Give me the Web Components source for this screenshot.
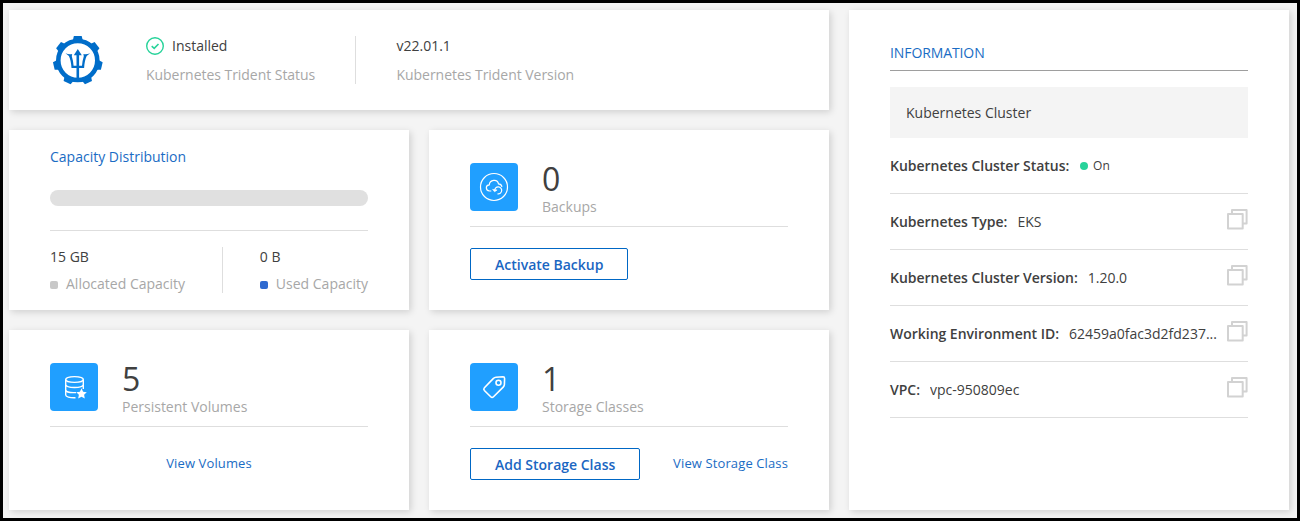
<!DOCTYPE html>
<html lang="en">
<head>
<meta charset="utf-8">
<title>Kubernetes Cluster</title>
<style>
html,body{margin:0;height:100%}
body{font:14px/20px "Open Sans","Noto Sans",sans-serif;color:#404040;overflow:hidden}
</style>
</head>
<body>
<cluster-dashboard></cluster-dashboard>
<script>
const define = (name, html) => customElements.define(name, class extends HTMLElement {
  constructor() {
    super();
    const t = document.createElement('template');
    t.innerHTML = html;
    this.attachShadow({mode: 'open'}).append(t.content.cloneNode(true));
  }
});

define('ui-card', `
<style>:host{display:block;box-sizing:border-box;background:#fff;box-shadow:2px 2px 7px rgba(0,0,0,.15);padding:0 41px}</style>
<slot></slot>`);

define('labelled-value', `
<style>:host{display:flex;flex-direction:column;gap:var(--gap,9px);white-space:nowrap}
.v,.l{display:flex;align-items:center;height:20px}
.l{color:#a7a7a7;letter-spacing:var(--ls,0)}</style>
<div class="v"><slot name="value"></slot></div><div class="l"><slot></slot></div>`);

const teeth = Array.from({length: 7}, (_, i) =>
  `<path d="M-5 -20L-3.9 -24.6H3.9L5 -20Z" transform="rotate(${i * 360 / 7})"/>`).join('');
define('trident-mark', `
<style>:host{display:block;width:52px;height:48px}svg{display:block;overflow:visible}</style>
<svg width="52" height="48" viewBox="-25.8 -24.5 52 48">
<g fill="#006dc9">${teeth}
<path d="M-1.3 18V7.6H-6.3C-6.6 2.5-7.6-2-8.9-4.4L-12.3-7.2Q-9-5.8-5.6-6.4Q-5.9-5.2-6-4.2Q-4.5 .5-4.2 5.3H-1.3V-5.2H-4L0-11.6L4-5.2H1.3V5.3H4.2Q4.5 .5 6-4.2Q5.9-5.2 5.6-6.4Q9-5.8 12.3-7.2L8.9-4.4C7.6-2 6.6 2.5 6.3 7.6H1.3V18Z"/>
</g>
<circle r="19.5" fill="none" stroke="#006dc9" stroke-width="4.6"/>
</svg>`);

define('icon-tile', `
<style>:host{display:block;width:48px;height:48px;border-radius:4px;background:#209fff}</style><slot></slot>`);

define('stat-head', `
<style>:host{display:flex;gap:24px;height:63px;border-bottom:1px solid #dedede;padding-top:33px}
.t{display:flex;flex-direction:column}
.n{font-size:32px;line-height:32px;height:34px}
.l{color:#a7a7a7;white-space:nowrap}</style>
<icon-tile><slot name="icon"></slot></icon-tile>
<div class="t"><div class="n"><slot name="count"></slot></div><div class="l"><slot></slot></div></div>`);

define('stat-actions', `
<style>:host{display:flex;justify-content:space-between;align-items:flex-start;padding-top:21px}</style><slot></slot>`);

define('outline-button', `
<style>:host{display:block;box-sizing:border-box;height:32px;border:1px solid #0067c5;border-radius:2px;padding:6px 24px;font-weight:600;color:#1a66c2;line-height:20px;white-space:nowrap}</style><slot></slot>`);

define('text-link', `
<style>:host{display:block;font-size:13px;line-height:20px;margin-top:5px;color:#1a6cc4;white-space:nowrap;letter-spacing:.12px}</style><slot></slot>`);

define('capacity-legend', `
<style>:host{display:contents}i{width:8px;height:8px;border-radius:2px;background:var(--c);margin:2px 8px 0 0}</style><i></i><slot></slot>`);

define('copy-icon', `
<style>:host{display:block;width:21px;height:21px;flex:none}svg{display:block}</style>
<svg width="21" height="21" viewBox="0 0 21 21" fill="none" stroke="#d2d2d2" stroke-width="2" stroke-linejoin="round">
<path d="M5 5V1H19.6V14.6H16"/><rect x="1" y="5" width="14.7" height="14.6"/></svg>`);

define('info-row', `
<style>:host{display:flex;box-sizing:border-box;height:56px;border-bottom:1px solid #dedede;padding-top:18px;align-items:flex-start;white-space:nowrap}
b{font-weight:600;margin-right:10px;letter-spacing:-.02px}
.v{flex:1;min-width:0;overflow:hidden;text-overflow:ellipsis;margin-right:7px}
.c{margin-top:-3px}</style>
<b><slot name="key"></slot></b><div class="v"><slot></slot></div><div class="c"><slot name="action"></slot></div>`);

define('cluster-dashboard', `
<style>
:host{display:grid;box-sizing:border-box;width:1300px;height:521px;border:3px solid #000;background:#f4f4f4;
 grid-template-columns:400px 400px 440px;grid-template-rows:100px 180px 180px;gap:20px;padding:7px 6px 5px}
.head{grid-column:1/3;display:flex;padding-top:26px;padding-left:43px;--ls:-.04px}
.head trident-mark{margin-right:42px}
.head .st{padding-right:39px;height:48px;border-right:1px solid #dedede;margin-right:40.5px;width:170px;box-sizing:content-box}
.ok{margin-right:8px;display:block}
.info{grid-column:3;grid-row:1/4}
.capt{color:#1a6cc4;padding-top:17px}
.bar{height:16px;border-radius:8px;background:#e0e0e0;margin-top:23px}
.rule{height:1px;background:#dedede;margin-top:24px}
.cap{display:flex;margin-top:16px;height:46px}
.cap labelled-value{--gap:7px}
.cap .a{width:172px;border-right:1px solid #dedede;margin-right:37px}
.it{color:#1a6cc4;padding-top:33px;height:27px;border-bottom:1px solid #9e9e9e;letter-spacing:-.1px}
.box{background:#f4f4f4;height:51px;line-height:51px;margin-top:16px;padding-left:16px}
.on{font-size:12px;display:flex;align-items:center;height:20px;padding-left:.7px}
.on i{width:8px;height:8px;border-radius:50%;background:#27d39a;margin-right:5px}
svg{display:block}
</style>
<ui-card class="head">
 <trident-mark></trident-mark>
 <labelled-value class="st"><svg class="ok" slot="value" width="18" height="18" viewBox="0 0 18 18" fill="none" stroke="#27d39a"><circle cx="9" cy="9" r="8.3" stroke-width="1.4"/><path d="M5.7 9.2L8.2 11.3L12.5 7" stroke-width="1.6"/></svg><span slot="value">Installed</span>Kubernetes Trident Status</labelled-value>
 <labelled-value><span slot="value">v22.01.1</span>Kubernetes Trident Version</labelled-value>
</ui-card>
<ui-card>
 <div class="capt">Capacity Distribution</div><div class="bar"></div><div class="rule"></div>
 <div class="cap">
  <labelled-value class="a"><span slot="value">15 GB</span><capacity-legend style="--c:#c8c8c8">Allocated Capacity</capacity-legend></labelled-value>
  <labelled-value><span slot="value">0 B</span><capacity-legend style="--c:#2f6ad0">Used Capacity</capacity-legend></labelled-value>
 </div>
</ui-card>
<ui-card>
 <stat-head><svg slot="icon" width="48" height="48" viewBox="0 0 48 48" fill="none" stroke="#fff" stroke-width="1.2"><circle cx="24" cy="24" r="13.5"/><path d="M21.3 28H19.5C15.2 27.6 15.4 22 19.3 21.8C19.7 16.4 27.5 15.6 28.5 20.8C30.4 20.8 31.6 22.1 32 23.8"/><path d="M24.7 27.5A3.5 3.5 0 1 1 27.5 30.8"/><path d="M22.6 26.4L24.6 28.8L27.1 27Z" fill="#fff" stroke-width=".6"/></svg><span slot="count">0</span>Backups</stat-head>
 <stat-actions><outline-button>Activate Backup</outline-button></stat-actions>
</ui-card>
<ui-card>
 <stat-head><svg slot="icon" width="48" height="48" viewBox="0 0 48 48" fill="none" stroke="#fff" stroke-width="1.4"><ellipse cx="24.5" cy="16.5" rx="8.8" ry="2.9"/><path d="M15.7 16.5V32C15.7 33.7 19.6 34.9 25.5 34.7M33.3 16.5V26M15.7 21.7C16.5 25.5 32.5 25.5 33.3 21.7M15.7 27C16.2 29 20.5 29.9 26 29.6"/><path d="M31.5 25.2L33.1 28.7L36.8 29.2L34.1 31.8L34.8 35.6L31.5 33.8L28.2 35.6L28.9 31.8L26.2 29.2L29.9 28.7Z" fill="#fff" stroke="none"/></svg><span slot="count">5</span>Persistent Volumes</stat-head>
 <stat-actions style="justify-content:center"><text-link>View Volumes</text-link></stat-actions>
</ui-card>
<ui-card>
 <stat-head><svg slot="icon" width="48" height="48" viewBox="0 0 48 48" fill="none" stroke="#fff" stroke-width="1.6"><path d="M26 14.2L33 13.8Q34.6 13.8 34.6 15.4L34.4 21.5Q34.3 23 33.2 24.1L23.5 33.8Q22.1 35.2 20.7 33.8L14.4 27.5Q13.1 26.1 14.4 24.7L23.2 15.6Q24.5 14.3 26 14.2Z"/><circle cx="28.5" cy="19.7" r="2.5"/></svg><span slot="count">1</span>Storage Classes</stat-head>
 <stat-actions><outline-button>Add Storage Class</outline-button><text-link>View Storage Class</text-link></stat-actions>
</ui-card>
<ui-card class="info">
 <div class="it">INFORMATION</div>
 <div class="box">Kubernetes Cluster</div>
 <info-row><span slot="key">Kubernetes Cluster Status:</span><div class="on"><i></i>On</div></info-row>
 <info-row><span slot="key">Kubernetes Type:</span>EKS<copy-icon slot="action"></copy-icon></info-row>
 <info-row><span slot="key">Kubernetes Cluster Version:</span>1.20.0<copy-icon slot="action"></copy-icon></info-row>
 <info-row><span slot="key">Working Environment ID:</span>62459a0fac3d2fd237...<copy-icon slot="action"></copy-icon></info-row>
 <info-row><span slot="key">VPC:</span>vpc-950809ec<copy-icon slot="action"></copy-icon></info-row>
</ui-card>`);
</script>
</body>
</html>
